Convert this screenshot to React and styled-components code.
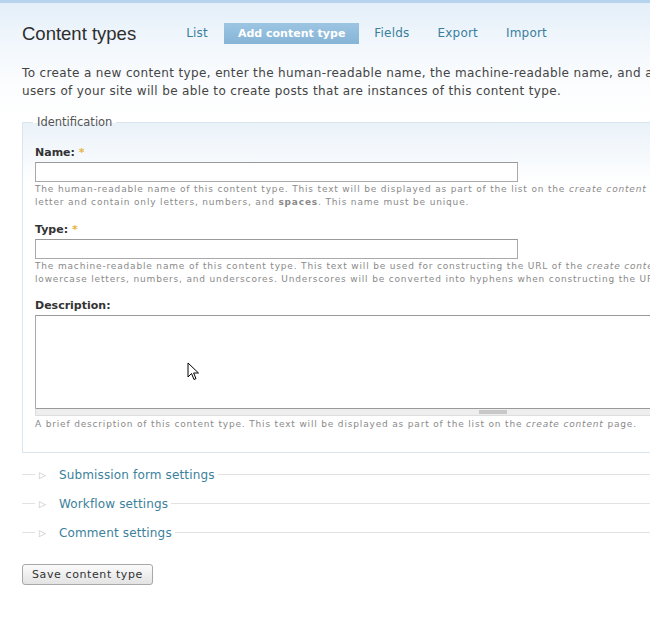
import React from "react";
import styled, { createGlobalStyle } from "styled-components";

const GlobalStyle = createGlobalStyle`
    html, body {
        margin: 0;
        padding: 0;
        background: #fff;
        overflow: hidden;
    }
    body {
        font-family: "DejaVu Sans", Verdana, sans-serif;
        color: #444;
    }
`

const Page = styled.div`
    position: relative;
    width: 990px;
    min-height: 618px;
    background: linear-gradient(#e4eff9 0px, #eef5fb 30px, #f7fafd 60px, #fff 110px);
    border-top: 3px solid #b7d4ee;
`

const Header = styled.div`
    height: 61px;
    display: flex;
    align-items: center;
    padding: 0 22px;
    gap: 36px;
`

const Title = styled.h1`
    margin: 0;
    font-family: "Liberation Sans", Arial, sans-serif;
    font-size: 18.5px;
    font-weight: normal;
    color: #2e2e2e;
`

const Tabs = styled.ul`
    display: flex;
    align-items: center;
    margin: 0;
    padding: 0;
    list-style: none;
`

const Tab = styled.li`
    line-height: 21px;
    padding: 0 ${p => (p.$active ? "14px" : "0")};
    margin: 0 ${p => (p.$active ? "1px 0 2px" : "14px")};
    color: ${p => (p.$active ? "#fff" : "#3a7fa0")};
    font-weight: ${p => (p.$active ? "bold" : "normal")};
    font-size: ${p => (p.$active ? "11px" : "12px")};
    letter-spacing: ${p => (p.$active ? "0" : "0.2px")};
    background: ${p => (p.$active ? "linear-gradient(#9cc5e2, #86b4d6)" : "none")};
`

const Intro = styled.p`
    margin: 0;
    padding: 0 22px;
    font-size: 12px;
    letter-spacing: 0.36px;
    line-height: 18px;
    color: #444;
    white-space: nowrap;
`

const Box = styled.fieldset`
    margin: 15px 22px 0;
    padding: 17px 12px 6px;
    border: 1px solid #dbe5ee;
    background: linear-gradient(#eaf2f9, #fff 60px);
`

const Legend = styled.legend`
    font-size: 11.5px;
    line-height: 14px;
    color: #555;
    padding: 0 4px;
    margin-left: -2px;
`

const Item = styled.div`
    margin-bottom: ${p => p.$gap ?? 14}px;
`

const Label = styled.label`
    display: block;
    font-size: 11px;
    font-weight: bold;
    line-height: 14px;
    color: #333;
    margin-bottom: 2px;
`

const Required = styled.span`
    color: #e5b545;
`

const Input = styled.input`
    display: block;
    box-sizing: border-box;
    width: 483px;
    height: 20px;
    margin: 0;
    border: 1px solid #a9a9a9;
    border-top-color: #999;
    background: #fff;
`

const TextArea = styled.textarea`
    display: block;
    box-sizing: border-box;
    width: 916px;
    height: 93px;
    margin: 0;
    border: 1px solid #aaa;
    border-top-color: #999;
    border-bottom: none;
    resize: none;
`

const Grippie = styled.div`
    width: 916px;
    height: 8px;
    box-sizing: border-box;
    border: 1px solid #ddd;
    border-top-color: #999;
    background: #eee;
    display: flex;
    justify-content: center;
    align-items: center;
    span {
        width: 28px;
        height: 4px;
        background: #c8c8c8;
    }
`

const Help = styled.div`
    font-size: 9px;
    line-height: 13px;
    letter-spacing: 0.83px;
    color: #8a8a8a;
    margin-top: ${p => p.$top || 1}px;
    white-space: nowrap;
`

const Collapsed = styled.div`
    margin-top: 7px;
    padding-left: 22px;
`

const CollapseRow = styled.div`
    display: flex;
    align-items: center;
    height: 29px;
    &::before {
        content: "";
        width: 13px;
        border-top: 1px solid #e2e2e2;
    }
    &::after {
        content: "";
        flex: 1;
        border-top: 1px solid #e2e2e2;
        margin-left: 3px;
    }
`

const Arrow = styled.span`
    font-size: 9px;
    color: #bbb;
    margin: 0 13px 0 4px;
`

const CollapseLink = styled.a`
    font-size: 12px;
    letter-spacing: 0.15px;
    color: #3b819b;
    text-decoration: none;
`

const Button = styled.button`
    margin: 17px 0 0 22px;
    height: 21px;
    padding: 0 9px;
    font-family: "DejaVu Sans", Verdana, sans-serif;
    font-size: 11px;
    letter-spacing: 0.6px;
    color: #333;
    border: 1px solid #a8a8a8;
    border-radius: 3px;
    background: linear-gradient(#fbfbfb, #e3e3e3);
`

const Cursor = styled.svg`
    position: absolute;
    left: 187px;
    top: 359px;
`

function App(){
    return (
        <Page>
            <GlobalStyle />
            <Header>
                <Title>Content types</Title>
                <Tabs>
                    <Tab>List</Tab>
                    <Tab $active>Add content type</Tab>
                    <Tab>Fields</Tab>
                    <Tab>Export</Tab>
                    <Tab>Import</Tab>
                </Tabs>
            </Header>
            <Intro>
                To create a new content type, enter the human-readable name, the machine-readable name, and all other relevant fields that are on this page. Once created,<br/>
                users of your site will be able to create posts that are instances of this content type.
            </Intro>
            <Box>
                <Legend>Identification</Legend>
                <Item>
                    <Label>Name: <Required>*</Required></Label>
                    <Input />
                    <Help>
                        The human-readable name of this content type. This text will be displayed as part of the list on the <em>create content</em> page. It is recommended that this name begin with a capital<br/>
                        letter and contain only letters, numbers, and <strong>spaces</strong>. This name must be unique.
                    </Help>
                </Item>
                <Item $gap={13}>
                    <Label>Type: <Required>*</Required></Label>
                    <Input />
                    <Help>
                        The machine-readable name of this content type. This text will be used for constructing the URL of the <em>create content</em> page for this content type. This name must contain only<br/>
                        lowercase letters, numbers, and underscores. Underscores will be converted into hyphens when constructing the URL of the <em>create content</em> page. This name must be unique.
                    </Help>
                </Item>
                <Item $gap={15}>
                    <Label>Description:</Label>
                    <TextArea />
                    <Grippie><span /></Grippie>
                    <Help $top={2}>
                        A brief description of this content type. This text will be displayed as part of the list on the <em>create content</em> page.
                    </Help>
                </Item>
            </Box>
            <Collapsed>
                <CollapseRow><Arrow>▷</Arrow><CollapseLink>Submission form settings</CollapseLink></CollapseRow>
                <CollapseRow><Arrow>▷</Arrow><CollapseLink>Workflow settings</CollapseLink></CollapseRow>
                <CollapseRow><Arrow>▷</Arrow><CollapseLink>Comment settings</CollapseLink></CollapseRow>
            </Collapsed>
            <Button>Save content type</Button>
            <Cursor width="13" height="20" viewBox="0 0 13 20">
                <path d="M1 1 L1 15 L4.5 11.5 L7 17.5 L9 16.6 L6.6 11 L11.5 11 Z" fill="#fff" stroke="#000" strokeWidth="1" strokeLinejoin="miter" />
            </Cursor>
        </Page>
    )
}

export default App;
